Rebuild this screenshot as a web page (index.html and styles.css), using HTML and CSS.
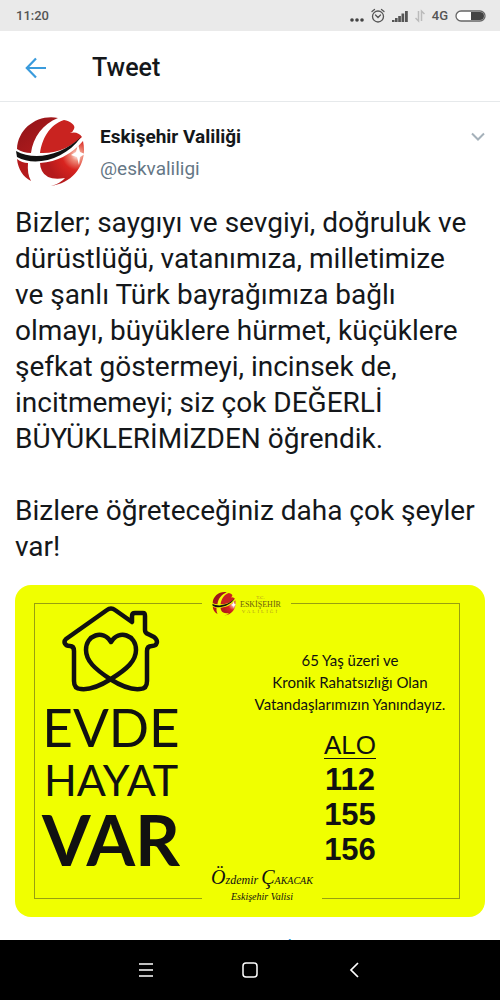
FILE: index.html
```html
<!DOCTYPE html>
<html lang="tr">
    <head>
        <meta charset="utf-8">
        <meta name="viewport" content="width=device-width, initial-scale=1">
        <title>Tweet</title>
        <link rel="stylesheet" href="styles.css">
    </head>
    <body>
        <svg class="defs" aria-hidden="true">
            <defs>
                <linearGradient id="dark-red" x1="0" y1="0" x2="1" y2="1">
                    <stop offset="0" stop-color="#8e1418"/>
                    <stop offset="1" stop-color="#b81c1e"/>
                </linearGradient>
                <radialGradient id="shine" gradientUnits="userSpaceOnUse" cx="62" cy="38" r="30">
                    <stop offset="0" stop-color="#fff"/>
                    <stop offset="0.2" stop-color="#ee8a78"/>
                    <stop offset="0.5" stop-color="#d8241f"/>
                    <stop offset="1" stop-color="#b51a1c"/>
                </radialGradient>
            </defs>
            <symbol id="emblem" viewBox="0 0 70 70">
                <path fill="url(#dark-red)" d="M43 1C23-3 3 11 2 32q6 4 14 4C18 20 28 7 43 1z"/>
                <path fill="#c92320" d="M25 36C27 22 34 8 49 3c6 1 12 5 10 9q-1 3-4 4 8-2 12 4C57 29 43 37 25 36z"/>
                <path fill="#b51a1c" d="M2 42q5 4 11 4-1 11 3 18C8 60 3 52 2 42z"/>
                <path fill="url(#shine)" d="M25 46q26-2 43-22c5 22-9 42-32 45q10-3 14-8-18 3-23-7-2-4-2-8z"/>
                <path fill="#111" d="M1 34c18 10 45 5 65-14C50 43 20 50 2 40z"/>
                <path fill="#fff" d="M63 27l2 8 5 2-5 3-1 8-2-8-6-2 5-3z"/>
            </symbol>
        </svg>

        <div class="status-bar">
            <span>11:20</span>
            <div class="status-icons">
                <svg width="14" height="16" viewBox="0 0 14 16" fill="#444"><circle cx="2" cy="12" r="1.800"/><circle cx="7" cy="12" r="1.800"/><circle cx="12" cy="12" r="1.800"/></svg>
                <svg width="14" height="16" viewBox="0 0 14 16" fill="none" stroke="#555" stroke-width="1.300" stroke-linecap="round"><circle cx="7" cy="8.500" r="5.500"/><path d="M4.500 7L7 9.500 9.500 7M1 3.500L3.500 1.500M13 3.500l-2.500-2"/></svg>
                <svg width="16" height="16" viewBox="0 0 16 16" fill="#555"><path d="M0 14v-2h2.500v2zM3 14v-4h2.600v4zM6.200 14V8h2.700v6zM9.500 14V5.500h2.700V14zM13 14V3h2.800v11z"/></svg>
                <svg width="10" height="16" viewBox="0 0 10 16" fill="none" stroke="#bbb" stroke-width="1.500"><path d="M3.500 3v10L.5 10M6.500 13V3l3 3"/></svg>
                <span>4G</span>
                <svg width="31" height="14" viewBox="0 0 31 14"><rect x="1" y="2" width="29" height="10" rx="5" fill="#fff" stroke="#666" stroke-width="1.300"/><path fill="#444" d="M16 3h9a4 4 0 0 1 0 8h-9z"/></svg>
            </div>
        </div>

        <header class="header">
            <button class="icon-button" aria-label="Geri">
                <svg width="22" height="22" viewBox="0 0 22 22" fill="none" stroke="#3a9bdc" stroke-width="2.200"><path d="M21 11H2M11 1.500L1.800 11l9.200 9.500"/></svg>
            </button>
            <h1 class="title">Tweet</h1>
        </header>

        <main class="tweet">
            <div class="author">
                <svg class="avatar" role="img" aria-label="Eskişehir Valiliği"><use href="#emblem"/></svg>
                <div class="author-text">
                    <strong class="name">Eskişehir Valiliği</strong>
                    <a class="handle" href="#">@eskvaliligi</a>
                </div>
                <button class="icon-button more" aria-label="Diğer">
                    <svg width="14" height="10" viewBox="0 0 14 10" fill="none" stroke="#a5b1ba" stroke-width="2"><path d="M1 1.500l6 6 6-6"/></svg>
                </button>
            </div>

            <div class="message">
                <p>Bizler; saygıyı ve sevgiyi, doğruluk ve dürüstlüğü, vatanımıza, milletimize ve şanlı Türk bayrağımıza bağlı olmayı, büyüklere hürmet, küçüklere şefkat göstermeyi, incinsek de, incitmemeyi; siz çok DEĞERLİ BÜYÜKLERİMİZDEN öğrendik.</p>
                <p>Bizlere öğreteceğiniz daha çok şeyler var!</p>
            </div>

            <div class="card">
                <div class="frame">
                    <div class="card-logo">
                        <svg class="mini-emblem" aria-hidden="true"><use href="#emblem"/></svg>
                        <div class="logo-text">
                            <span class="logo-small">T.C.</span>
                            <span class="logo-name">ESKİŞEHİR</span>
                            <span class="logo-small logo-wide">VALİLİĞİ</span>
                        </div>
                    </div>

                    <div class="slogan">
                        <svg width="98" height="88" viewBox="0 0 98 88" fill="none" stroke="#111" stroke-width="4.500" stroke-linecap="round" stroke-linejoin="round">
                            <path d="M49 74C38 81 28 85 19 84q-7 0-7-8V46q0-5-4-5c-5 0-7-4-4-7L45 5q4-3 8 0l17 12V11q0-3 3-3h8q2 0 2 3v14q0 3 3 4l6 3c5 4 3 9-2 9q-5 0-5 5v30q0 8-7 8c-9 1-19-3-30-10C33 64 24 56 24 45c0-15 17-21 25-8 8-13 25-7 25 8 0 11-9 19-25 29z"/>
                        </svg>
                        <span class="evde">EVDE</span>
                        <span class="hayat">HAYAT</span>
                        <span class="var">VAR</span>
                    </div>

                    <div class="contact">
                        <p class="notice">65 Yaş üzeri ve<br>Kronik Rahatsızlığı Olan<br>Vatandaşlarımızın Yanındayız.</p>
                        <span class="alo">ALO</span>
                        <span class="phone">112</span>
                        <span class="phone">155</span>
                        <span class="phone">156</span>
                    </div>

                    <div class="signature">
                        <span class="signer"><span class="initial">Ö</span>zdemir <span class="initial">Ç</span><span class="small-caps">AKACAK</span></span>
                        <span class="role">Eskişehir Valisi</span>
                    </div>
                </div>
            </div>

            <div class="meta">11:11 · 22 Mar 2020 · <a href="#">Twitter Web App</a></div>
        </main>

        <nav class="nav-bar">
            <button class="icon-button" aria-label="Menü">
                <svg width="16" height="16" viewBox="0 0 16 16" stroke="#fff" stroke-width="1.500"><path d="M1 2h14M1 8h14M1 14h14"/></svg>
            </button>
            <button class="icon-button" aria-label="Ana ekran">
                <svg width="16" height="16" viewBox="0 0 16 16" fill="none" stroke="#fff" stroke-width="1.500"><rect x="1" y="1" width="14" height="14" rx="3"/></svg>
            </button>
            <button class="icon-button" aria-label="Geri dön">
                <svg width="16" height="16" viewBox="0 0 16 16" fill="none" stroke="#fff" stroke-width="1.700"><path d="M12 1L5 8l7 7"/></svg>
            </button>
        </nav>
    </body>
</html>
```
FILE: styles.css
```css
* {
    box-sizing: border-box;
}

body {
    margin: 0;
    height: 100vh;
    display: flex;
    flex-direction: column;
    background-color: #fff;
    color: #14171a;
    font-family: Roboto, sans-serif;
}

p {
    margin: 0;
}

a {
    text-decoration: none;
}

svg {
    display: block;
    flex-shrink: 0;
}

.defs {
    position: absolute;
    width: 0;
    height: 0;
}

.icon-button {
    display: flex;
    align-items: center;
    justify-content: center;
    padding: 0;
    border: 0;
    background: none;
    cursor: pointer;
}

.status-bar {
    display: flex;
    flex-shrink: 0;
    align-items: center;
    justify-content: space-between;
    height: 31px;
    padding: 0 14px 0 16px;
    background-color: #eaeaea;
    color: #555;
    font-size: 13px;
    font-weight: 500;
}

.status-icons {
    display: flex;
    align-items: center;
    gap: 7px;
}

.header {
    display: flex;
    flex-shrink: 0;
    align-items: center;
    gap: 45px;
    height: 71px;
    padding: 3px 25px 0;
    border-bottom: 1px solid #e6e9eb;
}

.title {
    margin: 0;
    font-size: 25px;
    font-weight: 500;
}

.tweet {
    flex: 1;
    min-height: 0;
    overflow: hidden;
    padding: 15px 15px 0;
}

.author {
    display: flex;
    gap: 15px;
    height: 70px;
}

.avatar {
    width: 70px;
    height: 70px;
}

.author-text {
    display: flex;
    flex: 1;
    flex-direction: column;
    gap: 8px;
    padding-top: 8px;
    font-size: 19px;
    line-height: 24px;
}

.name {
    font-weight: 700;
}

.handle {
    color: #657786;
}

.more {
    align-self: flex-start;
    height: 40px;
}

.message {
    display: flex;
    flex-direction: column;
    gap: 36px;
    margin: 18px 0 20px;
    padding-right: 8px;
    font-size: 28px;
    line-height: 36px;
}

.card {
    padding: 18px 25px 18px 19px;
    border-radius: 16px;
    background-color: #f0ff00;
    color: #111;
}

.frame {
    position: relative;
    display: grid;
    grid-template-columns: 152px 1fr;
    height: 296px;
    border: 1px solid #98a010;
}

/* logo and signature sit on top of the frame line */
.card-logo {
    position: absolute;
    top: -12px;
    left: 167px;
    display: flex;
    align-items: center;
    gap: 4px;
    padding: 0 10px;
    background-color: #f0ff00;
}

.mini-emblem {
    width: 24px;
    height: 24px;
}

.logo-text {
    display: flex;
    flex-direction: column;
    align-items: center;
    color: #6b5a10;
    font-family: "Liberation Serif", serif;
    line-height: 7px;
}

.logo-name {
    font-size: 8px;
}

.logo-small {
    color: #b09a20;
    font-size: 5px;
}

.logo-wide {
    letter-spacing: 2px;
}

.slogan {
    display: flex;
    flex-direction: column;
    align-items: center;
    padding-top: 1px;
    font-family: Lato, sans-serif;
}

.evde {
    margin-top: 6px;
    font-size: 53px;
    line-height: 56px;
}

.hayat {
    font-size: 43px;
    line-height: 50px;
}

.var {
    font-size: 70px;
    font-weight: 700;
    line-height: 68px;
}

.contact {
    display: flex;
    flex-direction: column;
    align-items: center;
    padding: 45px 0 0 54px;
    font-family: "Liberation Sans", sans-serif;
}

.notice {
    margin-bottom: 18px;
    font-family: Lato, sans-serif;
    font-size: 15px;
    line-height: 22px;
    text-align: center;
    white-space: nowrap;
}

.alo {
    margin-bottom: 3px;
    border-bottom: 1px solid #111;
    font-size: 26px;
    line-height: 25px;
}

.phone {
    font-size: 31px;
    font-weight: 700;
    line-height: 35px;
}

.signature {
    position: absolute;
    bottom: -5px;
    left: 167px;
    display: flex;
    flex-direction: column;
    align-items: center;
    width: 120px;
    background-color: #f0ff00;
    font-family: "Liberation Serif", serif;
    font-style: italic;
    white-space: nowrap;
}

.signer {
    font-size: 12px;
    line-height: 20px;
}

.initial {
    font-size: 20px;
}

.small-caps {
    font-size: 10px;
}

.role {
    font-size: 10px;
    line-height: 12px;
}

.meta {
    margin-top: 18px;
    color: #657786;
    font-size: 19px;
    line-height: 24px;
}

.meta a {
    color: #1b95e0;
}

.nav-bar {
    display: flex;
    flex-shrink: 0;
    align-items: center;
    justify-content: center;
    gap: 88px;
    height: 60px;
    background-color: #000;
}
```
